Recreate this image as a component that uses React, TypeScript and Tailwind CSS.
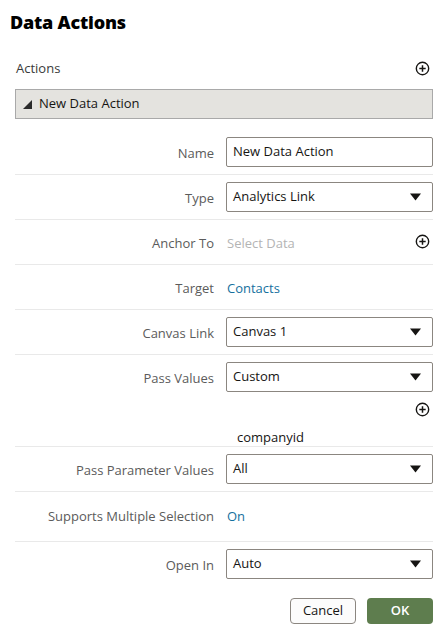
import type { ReactNode } from 'react'

function PlusCircle() {
  return (
    <svg width="15" height="15" viewBox="0 0 16 16" className="shrink-0">
      <circle cx="8" cy="8" r="6.6" fill="none" stroke="#161513" strokeWidth="1.5" />
      <path d="M8 4.6v6.8M4.6 8h6.8" stroke="#161513" strokeWidth="1.6" />
    </svg>
  )
}

function Caret() {
  return (
    <svg width="11" height="8" viewBox="0 0 11 8" className="shrink-0">
      <polygon points="0,0.5 11,0.5 5.5,7.5" fill="#161513" />
    </svg>
  )
}

function Select({ value }: { value: string }) {
  return (
    <div className="flex h-[30px] w-[207px] items-center justify-between rounded-[2px] border border-[#8b8680] bg-white pl-[6px] pr-[11px] text-[13px] text-[#161513]">
      <span>{value}</span>
      <Caret />
    </div>
  )
}

// labels sit ~2px below the row's centre, like the original
function Row({ label, children, className = '', low = true }: { label: string; children: ReactNode; className?: string; low?: boolean }) {
  return (
    <div className={`flex items-center border-b border-[#e9e9e9] ${className}`}>
      <div className={`w-[200px] shrink-0 pr-px text-right text-[13px] text-[#5b5b5b] ${low ? 'pt-[4px]' : ''}`}>{label}</div>
      <div className="ml-[11px] flex min-h-[30px] flex-1 items-center">{children}</div>
    </div>
  )
}

export default function App() {
  return (
    <div className="min-h-[629px] w-[445px] bg-white pb-[6px] text-[#161513]" style={{ fontFamily: '"Open Sans", "Noto Sans", sans-serif' }}>
      <h1 className="pl-[10px] pt-[9px] text-[18px] font-extrabold leading-[26px] tracking-[-0.2px] text-black">Data Actions</h1>

      <div className="pl-[15px] pr-[12px]">
        <div className="mt-[24px] flex items-center justify-between pl-px pr-[3px]">
          <span className="text-[13px] text-[#3a3a3a]">Actions</span>
          <PlusCircle />
        </div>

        <div className="mt-[10px] flex h-[30px] items-center gap-[7px] border border-[#a9a9a9] bg-[#e4e3df] pl-[7px] pt-px text-[13px] text-[#161513]">
          <svg width="9" height="9" viewBox="0 0 9 9">
            <polygon points="9,0 9,9 0,9" fill="#2a2a2a" />
          </svg>
          <span>New Data Action</span>
        </div>

        <Row label="Name" className="pb-[7px] pt-[18px]">
          <div className="flex h-[30px] w-[207px] items-center rounded-[2px] border border-[#8b8680] bg-white pl-[6px] text-[13px] text-[#161513]">
            New Data Action
          </div>
        </Row>

        <Row label="Type" className="py-[7px]">
          <Select value="Analytics Link" />
        </Row>

        <Row label="Anchor To" className="py-[7px]">
          <div className="flex flex-1 items-center justify-between pl-px pr-[3px]">
            <span className="pt-[4px] text-[13px] text-[#b4b4b4]">Select Data</span>
            <PlusCircle />
          </div>
        </Row>

        <Row label="Target" className="py-[7px]">
          <span className="pl-px pt-[4px] text-[13px] text-[#16709e]">Contacts</span>
        </Row>

        <Row label="Canvas Link" className="py-[7px]">
          <Select value="Canvas 1" />
        </Row>

        <div className="border-b border-[#e9e9e9] pt-[7px]">
          <div className="flex items-center">
            <div className="w-[200px] shrink-0 pr-px pt-[4px] text-right text-[13px] text-[#5b5b5b]">Pass Values</div>
            <div className="ml-[11px]">
              <Select value="Custom" />
            </div>
          </div>
          <div className="mt-[10px] flex justify-end pr-[3px]">
            <PlusCircle />
          </div>
          <div className="mt-[11px] pl-[222px] text-[13px] leading-[18px] text-[#161513]">companyid</div>
        </div>

        <Row label="Pass Parameter Values" className="py-[7px]">
          <Select value="All" />
        </Row>

        <Row label="Supports Multiple Selection" low={false} className="pb-[9px] pt-[10px]">
          <span className="pl-px text-[13px] text-[#16709e]">On</span>
        </Row>

        <div className="flex items-center pt-[7px]">
          <div className="w-[200px] shrink-0 pr-px pt-[4px] text-right text-[13px] text-[#5b5b5b]">Open In</div>
          <div className="ml-[11px]">
            <Select value="Auto" />
          </div>
        </div>

        <div className="mt-[19px] flex justify-end gap-[11px]">
          <button className="h-[26px] w-[66px] rounded-[4px] border border-[#8b8680] bg-[#fcfcfc] text-[13px] text-[#161513]">Cancel</button>
          <button className="h-[26px] w-[66px] rounded-[4px] bg-[#5e7d4e] text-[13px] font-semibold text-white">OK</button>
        </div>
      </div>
    </div>
  )
}
